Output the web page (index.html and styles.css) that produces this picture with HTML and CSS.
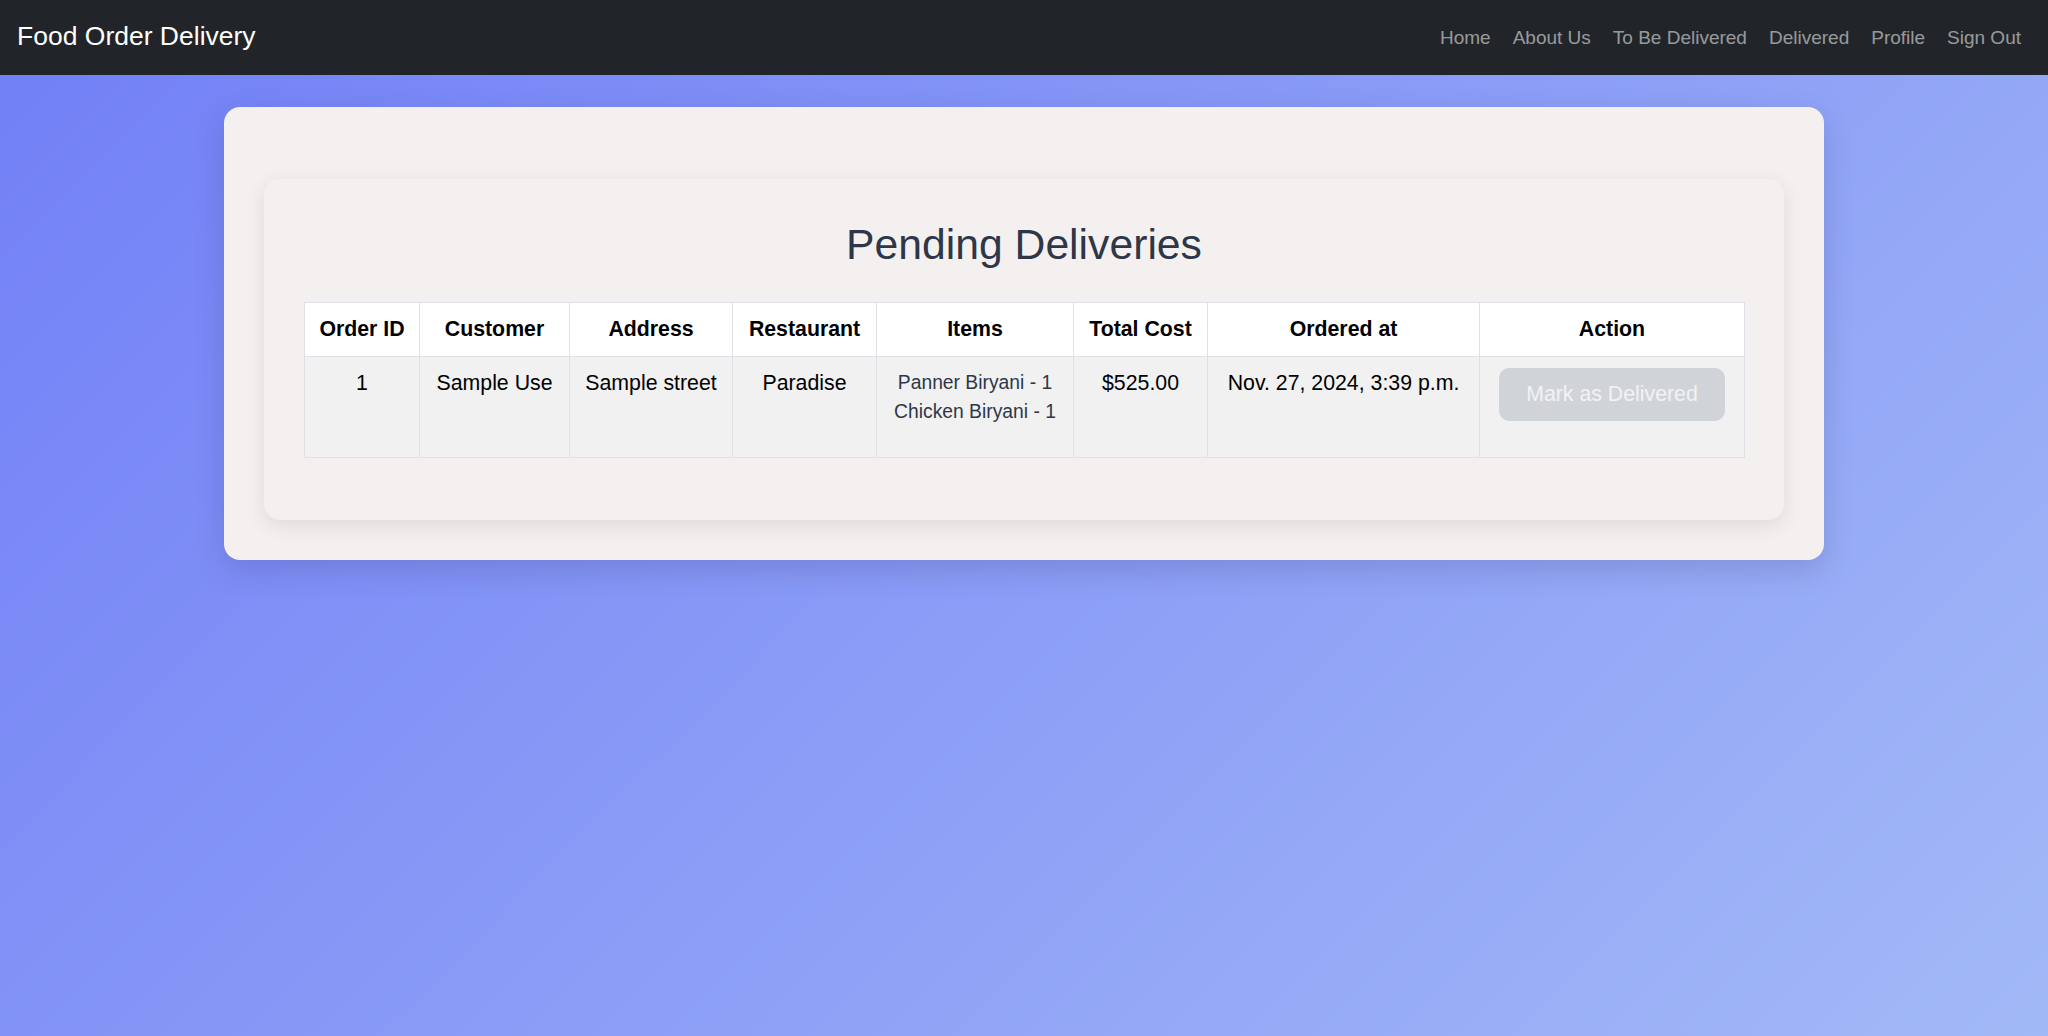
FILE: index.html
```html
<!DOCTYPE html>
<html lang="en">
<head>
<meta charset="utf-8">
<title>Food Order Delivery</title>
<link rel="stylesheet" href="styles.css">
</head>
<body>
<nav class="navbar">
  <a class="brand" href="#">Food Order Delivery</a>
  <ul class="nav-links">
    <li><a href="#">Home</a></li>
    <li><a href="#">About Us</a></li>
    <li><a href="#">To Be Delivered</a></li>
    <li><a href="#">Delivered</a></li>
    <li><a href="#">Profile</a></li>
    <li><a href="#">Sign Out</a></li>
  </ul>
</nav>
<main class="main">
  <section class="outer-card">
    <div class="inner-card">
      <h2 class="title">Pending Deliveries</h2>
      <table class="orders">
        <colgroup>
          <col class="c-id"><col class="c-cust"><col class="c-addr"><col class="c-rest">
          <col class="c-items"><col class="c-cost"><col class="c-date"><col class="c-act">
        </colgroup>
        <thead>
          <tr>
            <th>Order ID</th>
            <th>Customer</th>
            <th>Address</th>
            <th>Restaurant</th>
            <th>Items</th>
            <th>Total Cost</th>
            <th>Ordered at</th>
            <th>Action</th>
          </tr>
        </thead>
        <tbody>
          <tr>
            <td>1</td>
            <td>Sample Use</td>
            <td>Sample street</td>
            <td>Paradise</td>
            <td>
              <ul class="items">
                <li>Panner Biryani - 1</li>
                <li>Chicken Biryani - 1</li>
              </ul>
            </td>
            <td>$525.00</td>
            <td>Nov. 27, 2024, 3:39 p.m.</td>
            <td><button class="btn-deliver" type="button">Mark as Delivered</button></td>
          </tr>
        </tbody>
      </table>
    </div>
  </section>
</main>
</body>
</html>
```

FILE: styles.css
```css
* {
  box-sizing: border-box;
}

html, body {
  margin: 0;
  padding: 0;
}

body {
  min-height: 100vh;
  font-family: "Liberation Sans", Arial, Helvetica, sans-serif;
  font-size: 21.3px;
  line-height: 1.5;
  color: #000;
  background: linear-gradient(135deg, #717ff7 0%, #8a9cf6 50%, #a2b9f7 100%);
  background-attachment: fixed;
}

.navbar {
  height: 75px;
  background: #212529;
  display: flex;
  align-items: center;
  justify-content: space-between;
  padding: 0 16px 0 17px;
}

.brand {
  color: #fff;
  font-size: 26.5px;
  text-decoration: none;
  line-height: 1;
  padding-bottom: 2px;
}

.nav-links {
  list-style: none;
  margin: 0;
  padding: 0;
  display: flex;
}

.nav-links a {
  display: block;
  padding: 0 11px;
  font-size: 19px;
  color: rgba(255, 255, 255, 0.55);
  text-decoration: none;
  line-height: 1;
}

.main {
  padding-top: 32px;
}

.outer-card {
  width: 1600px;
  margin: 0 auto;
  background: #f5f0f0;
  border-radius: 16px;
  padding: 72px 40px 40px;
  box-shadow: 0 10px 30px rgba(40, 40, 90, 0.18);
}

.inner-card {
  background: #f5f0f0;
  border-radius: 16px;
  padding: 40px 40px 40px;
  box-shadow: 0 6px 20px rgba(0, 0, 0, 0.09);
}

.title {
  margin: 0 0 32px;
  text-align: center;
  font-size: 42.7px;
  font-weight: 400;
  line-height: 1.2;
  color: #2d3748;
}

.orders {
  width: 1440px;
  table-layout: fixed;
  border-collapse: collapse;
  margin-bottom: 22px;
}

.c-id { width: 115px; }
.c-cust { width: 150px; }
.c-addr { width: 163px; }
.c-rest { width: 144px; }
.c-items { width: 197px; }
.c-cost { width: 134px; }
.c-date { width: 272px; }
.c-act { width: 265px; }

.orders th,
.orders td {
  border: 1px solid #dfe1e6;
  padding: 10.4px 8px;
  text-align: center;
  vertical-align: top;
  white-space: nowrap;
  overflow: hidden;
}

.orders th {
  background: #fff;
  font-weight: 700;
  color: #000;
}

.orders td {
  padding-top: 11.4px;
  background: #f1f1f1;
  color: #000;
}

.items {
  list-style: none;
  margin: 0 0 20px;
  padding: 0;
  font-size: 19.3px;
  line-height: 29px;
  color: #2d3748;
}

.btn-deliver {
  font-family: inherit;
  font-size: 21.3px;
  line-height: 31px;
  padding: 11px 27px;
  border: 0;
  border-radius: 10px;
  background: #d0d4d8;
  color: #f1f2f4;
  cursor: default;
}
```
